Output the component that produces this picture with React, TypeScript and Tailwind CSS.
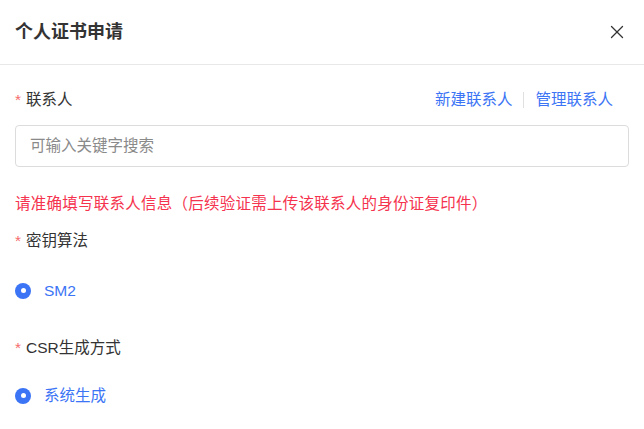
import { X } from "lucide-react"

function Label({ text }: { text: string }) {
  return (
    <div className="flex items-center text-[15.5px] leading-[21px] text-[#333]">
      <span className="mr-[5px] text-[#f56c6c]">*</span>
      {text}
    </div>
  )
}

function Radio({ text }: { text: string }) {
  return (
    <div className="flex items-center gap-[13px]">
      <span className="flex h-[16px] w-[16px] items-center justify-center rounded-full bg-[#3b74f5]">
        <span className="h-[5px] w-[5px] rounded-full bg-white" />
      </span>
      <span className="text-[15.5px] leading-[21px] text-[#3b74f5]">{text}</span>
    </div>
  )
}

export default function App() {
  return (
    <div
      className="h-[429px] w-[644px] bg-white"
      style={{ fontFamily: '"Liberation Sans", "Noto Sans CJK SC", sans-serif' }}
    >
      <div className="flex h-[65px] items-center justify-between border-b border-[#e8e8e8] pl-[15px] pr-[16px]">
        <h1 className="text-[18px] font-bold text-[#333]">个人证书申请</h1>
        <X className="h-[22px] w-[22px] text-[#333]" strokeWidth={1.4} />
      </div>

      <div className="px-[15px]">
        <div className="mt-[24px] flex items-center justify-between pr-[16px]">
          <Label text="联系人" />
          <div className="flex items-center text-[15.5px] leading-[21px] text-[#3b74f5]">
            <span>新建联系人</span>
            <span className="mx-[11px] h-[16px] w-px bg-[#e0e0e0]" />
            <span>管理联系人</span>
          </div>
        </div>

        <div className="mt-[15px] flex h-[42px] w-[614px] items-center rounded-[4px] border border-[#dcdcdc] px-[14px] text-[15.5px] text-[#8a8a8a]">
          可输入关键字搜索
        </div>

        <p className="mt-[26px] text-[15.5px] leading-[21px] tracking-[0.25px] text-[#f5334e]">
          请准确填写联系人信息（后续验证需上传该联系人的身份证复印件）
        </p>

        <div className="mt-[16px]">
          <Label text="密钥算法" />
        </div>
        <div className="mt-[29px]">
          <Radio text="SM2" />
        </div>

        <div className="mt-[36px]">
          <Label text="CSR生成方式" />
        </div>
        <div className="mt-[27px]">
          <Radio text="系统生成" />
        </div>
      </div>
    </div>
  )
}
